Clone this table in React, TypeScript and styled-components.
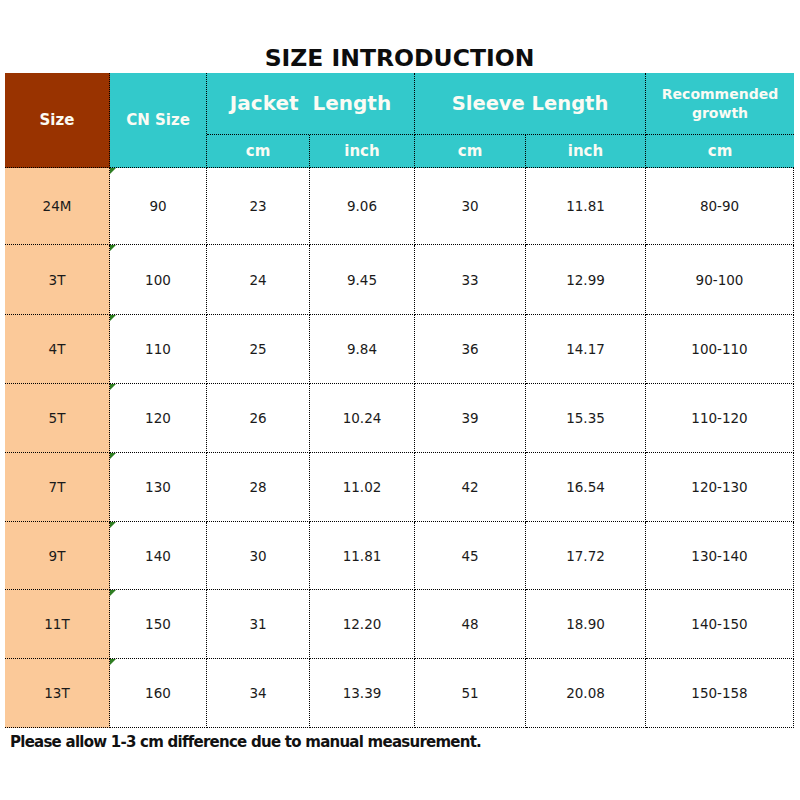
import React from "react";
import styled, { createGlobalStyle } from "styled-components";

const Global = createGlobalStyle`
  html, body { margin: 0; padding: 0; background: #ffffff; }
  body { width: 800px; height: 800px; overflow: hidden; }
`;

const Page = styled.div`
  width: 800px;
  height: 800px;
  box-sizing: border-box;
  padding: 44px 6px 0 5px;
  display: flex;
  flex-direction: column;
  font-family: "DejaVu Sans", "Noto Sans", sans-serif;
`;

const Title = styled.h1`
  margin: 0;
  text-align: center;
  font-size: 23.5px;
  font-weight: 700;
  line-height: 29px;
  color: #0d0d0d;
`;

const Grid = styled.div`
  display: grid;
  grid-template-columns: 105px 97px 103px 105px 111px 120px 148px;
  grid-template-rows: 62px 33px 77px 70px 69px 69px 69px 68px 69px 69px;
`;

const dotted = "1px dotted #000";

const HeadCell = styled.div<{ $bg?: string; $size?: number; $span?: string; $edge?: boolean; $lh?: number }>`
  grid-column: ${(p) => p.$span || "auto"};
  box-sizing: border-box;
  display: flex;
  align-items: center;
  justify-content: center;
  text-align: center;
  background: ${(p) => p.$bg || "#33c9cb"};
  color: #fbfbf4;
  font-weight: 700;
  font-size: ${(p) => p.$size || 15}px;
  line-height: ${(p) => p.$lh || 19}px;
  border-bottom: ${dotted};
  border-right: ${(p) => (p.$edge ? "none" : dotted)};
  white-space: pre;
`;

const SizeCell = styled.div`
  box-sizing: border-box;
  display: flex;
  align-items: center;
  justify-content: center;
  background: #fbc999;
  color: #1a1a1a;
  font-size: 13.5px;
  border-bottom: ${dotted};
  border-right: ${dotted};
`;

const Cell = styled.div<{ $mark?: boolean }>`
  position: relative;
  box-sizing: border-box;
  display: flex;
  align-items: center;
  justify-content: center;
  background: #ffffff;
  color: #1a1a1a;
  font-size: 13.5px;
  border-bottom: ${dotted};
  border-right: ${dotted};
  &::before {
    content: "";
    display: ${(p) => (p.$mark ? "block" : "none")};
    position: absolute;
    top: 0;
    left: 0;
    width: 0;
    height: 0;
    border-top: 6px solid #2f7d22;
    border-right: 6px solid transparent;
  }
`;

const Note = styled.p`
  margin: 5px 0 0 5px;
  font-size: 15px;
  line-height: 18px;
  font-weight: 700;
  color: #111;
  letter-spacing: -0.75px;
`;

const rows = [
  ["24M", "90", "23", "9.06", "30", "11.81", "80-90"],
  ["3T", "100", "24", "9.45", "33", "12.99", "90-100"],
  ["4T", "110", "25", "9.84", "36", "14.17", "100-110"],
  ["5T", "120", "26", "10.24", "39", "15.35", "110-120"],
  ["7T", "130", "28", "11.02", "42", "16.54", "120-130"],
  ["9T", "140", "30", "11.81", "45", "17.72", "130-140"],
  ["11T", "150", "31", "12.20", "48", "18.90", "140-150"],
  ["13T", "160", "34", "13.39", "51", "20.08", "150-158"],
];

export default function App() {
  return (
    <>
      <Global />
      <Page>
        <Title>SIZE INTRODUCTION</Title>
        <Grid>
          <HeadCell $bg="#993300" style={{ gridRow: "1 / span 2" }}>Size</HeadCell>
          <HeadCell style={{ gridRow: "1 / span 2" }}>CN Size</HeadCell>
          <HeadCell $span="3 / span 2" $size={20}>{"Jacket  Length"}</HeadCell>
          <HeadCell $span="5 / span 2" $size={19.5}>Sleeve Length</HeadCell>
          <HeadCell $edge $size={14}>{"Recommended\ngrowth"}</HeadCell>
          <HeadCell>cm</HeadCell>
          <HeadCell>inch</HeadCell>
          <HeadCell>cm</HeadCell>
          <HeadCell>inch</HeadCell>
          <HeadCell $edge>cm</HeadCell>
          {rows.map((r) => (
            <React.Fragment key={r[0]}>
              <SizeCell>{r[0]}</SizeCell>
              {r.slice(1).map((v, i) => (
                <Cell key={i} $mark={i === 0}>{v}</Cell>
              ))}
            </React.Fragment>
          ))}
        </Grid>
        <Note>Please allow 1-3 cm difference due to manual measurement.</Note>
      </Page>
    </>
  );
}
